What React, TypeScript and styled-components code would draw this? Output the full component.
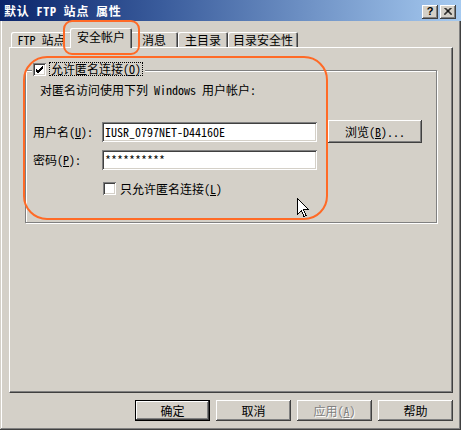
import React from "react";
import styled, { createGlobalStyle } from "styled-components";

const FONT = `"Noto Sans Mono CJK SC", "Noto Sans CJK SC", "Liberation Mono", monospace`;

const GlobalStyle = createGlobalStyle`
  html, body { margin: 0; padding: 0; background: #d4d0c8; }
  body { font-family: ${FONT}; font-size: 12px; color: #000; }
  * { box-sizing: border-box; }
  u { text-decoration: underline; text-underline-offset: 1px; }
`;

const raised = `inset -1px -1px 0 #404040, inset 1px 1px 0 #ffffff, inset -2px -2px 0 #808080, inset 2px 2px 0 #d4d0c8`;
const sunken = `inset 1px 1px 0 #808080, inset -1px -1px 0 #ffffff, inset 2px 2px 0 #404040, inset -2px -2px 0 #d4d0c8`;

const Window = styled.div`
  position: relative;
  width: 461px;
  height: 430px;
  background: #d4d0c8;
  box-shadow: inset -1px -1px 0 #404040, inset 1px 1px 0 #d4d0c8,
    inset -2px -2px 0 #808080, inset 2px 2px 0 #ffffff;
  display: flex;
  flex-direction: column;
  overflow: hidden;
`;

const TitleBar = styled.div`
  flex: none;
  height: 21px;
  display: flex;
  align-items: center;
  padding: 0 5px 0 4px;
  background: linear-gradient(to right, #0a246a 0%, #3a5c9c 35%, #a6caf0 100%);
`;

const TitleText = styled.div`
  flex: 1;
  color: #ffffff;
  font-weight: bold;
  font-size: 12px;
  line-height: 14px;
  letter-spacing: 0.8px;
  white-space: pre;
`;

const CaptionButtons = styled.div`
  display: flex;
  gap: 2px;
  margin-top: 3px;
`;

const CaptionButton = styled.div`
  width: 16px;
  height: 14px;
  background: #d4d0c8;
  box-shadow: inset -1px -1px 0 #404040, inset 1px 1px 0 #ffffff, inset -2px -2px 0 #808080;
  display: flex;
  align-items: center;
  justify-content: center;
  font-family: "Liberation Sans", sans-serif;
  font-weight: bold;
  font-size: 11px;
  line-height: 1;
  padding-bottom: 1px;
`;

const Body = styled.div`
  flex: 1;
  display: flex;
  flex-direction: column;
  padding: 7px 8px 0 9px;
`;

const TabStrip = styled.div`
  display: flex;
  align-items: flex-end;
  height: 19px;
  padding-left: 2px;
  position: relative;
  z-index: 1;
`;

const Tab = styled.div<{ $w: number; $active?: boolean }>`
  position: relative;
  z-index: ${(p) => (p.$active ? 2 : 1)};
  width: ${(p) => p.$w}px;
  height: ${(p) => (p.$active ? 20 : 15)}px;
  margin: ${(p) => (p.$active ? "0 -2px -1px -2px" : "0")};
  background: #d4d0c8;
  border-radius: 2px 2px 0 0;
  box-shadow: inset 1px 1px 0 #ffffff, inset -1px 0 0 #404040, inset -2px 0 0 #808080;
  display: flex;
  justify-content: center;
  align-items: ${(p) => (p.$active ? "flex-start" : "center")};
  padding-top: ${(p) => (p.$active ? "2px" : "1px")};
  line-height: 14px;
  white-space: pre;
`;

const Panel = styled.div`
  height: 346px;
  border-top: 1px solid #ffffff;
  border-left: 1px solid #ffffff;
  border-right: 1px solid #404040;
  border-bottom: 1px solid #404040;
  box-shadow: inset -1px -1px 0 #808080;
  padding: 22px 15px 0 15px;
`;

const GroupBox = styled.div`
  height: 153px;
  border: 1px solid #808080;
  box-shadow: inset 1px 1px 0 #ffffff, 1px 1px 0 #ffffff;
  padding: 0 0 0 7px;
  display: flex;
  flex-direction: column;
`;

const Legend = styled.div`
  align-self: flex-start;
  display: flex;
  align-items: center;
  gap: 3px;
  height: 14px;
  margin: -9px 0 0 -1px;
  padding: 0 2px 0 1px;
  background: #d4d0c8;
`;

const CheckBox = styled.div<{ $offset?: number }>`
  flex: none;
  width: 13px;
  height: 13px;
  margin-left: ${(p) => p.$offset ?? 0}px;
  background: #ffffff;
  box-shadow: ${sunken};
  display: flex;
  align-items: center;
  justify-content: center;
`;

const FocusLabel = styled.span`
  border: 1px dotted #000;
  padding: 0 1px;
  line-height: 12px;
  height: 14px;
  display: inline-flex;
  align-items: center;
  white-space: pre;
`;

const Description = styled.div`
  margin-top: 7px;
  padding-left: 7px;
  line-height: 14px;
  white-space: pre;
`;

const Row = styled.div<{ $top: number; $h: number }>`
  display: flex;
  align-items: center;
  margin-top: ${(p) => p.$top}px;
  height: ${(p) => p.$h}px;
`;

const FieldLabel = styled.div`
  width: 69px;
  flex: none;
  line-height: 14px;
  white-space: pre;
`;

const TextInput = styled.div`
  width: 215px;
  height: 20px;
  flex: none;
  background: #ffffff;
  box-shadow: ${sunken};
  padding: 0 3px;
  display: flex;
  align-items: center;
  line-height: 14px;
  white-space: pre;
`;

const CheckText = styled.span`
  margin-left: 4px;
  line-height: 14px;
  white-space: pre;
`;

const Button = styled.div<{ $w: number; $h: number; $default?: boolean; $disabled?: boolean }>`
  width: ${(p) => p.$w}px;
  height: ${(p) => p.$h}px;
  flex: none;
  background: #d4d0c8;
  border: ${(p) => (p.$default ? "1px solid #000" : "none")};
  box-shadow: ${raised};
  display: flex;
  align-items: center;
  justify-content: center;
  line-height: 14px;
  white-space: pre;
  color: ${(p) => (p.$disabled ? "#808080" : "#000")};
  text-shadow: ${(p) => (p.$disabled ? "1px 1px 0 #ffffff" : "none")};
`;

const BrowseButton = styled(Button)`
  margin-left: 11px;
`;

const ButtonBar = styled.div`
  display: flex;
  justify-content: flex-end;
  gap: 6px;
  margin-top: 7px;
`;

const Highlight = styled.div<{ $x: number; $y: number; $w: number; $h: number; $r: number }>`
  position: absolute;
  left: ${(p) => p.$x}px;
  top: ${(p) => p.$y}px;
  width: ${(p) => p.$w}px;
  height: ${(p) => p.$h}px;
  border: 2px solid #ff6a26;
  border-radius: ${(p) => p.$r}px;
  pointer-events: none;
  z-index: 5;
`;

const Cursor = styled.svg`
  position: absolute;
  left: 297px;
  top: 198px;
  z-index: 6;
`;

const Check = () => (
  <svg width="9" height="9" viewBox="0 0 9 9">
    <path d="M1 4 L3 6 L8 1 M1 5 L3 7 L8 2 M1 6 L3 8 L8 3" stroke="#000" strokeWidth="1" fill="none" shapeRendering="crispEdges" />
  </svg>
);

export default function App() {
  return (
    <>
      <GlobalStyle />
      <Window>
        <TitleBar>
          <TitleText>默认 FTP 站点 属性</TitleText>
          <CaptionButtons>
            <CaptionButton>?</CaptionButton>
            <CaptionButton>
              <svg width="8" height="7" viewBox="0 0 8 7">
                <path d="M0.5 0 L7.5 7 M1.5 0 L8 6.5 M7.5 0 L0.5 7 M6.5 0 L0 6.5" stroke="#000" strokeWidth="1" />
              </svg>
            </CaptionButton>
          </CaptionButtons>
        </TitleBar>
        <Body>
          <TabStrip>
            <Tab $w={61}>FTP 站点</Tab>
            <Tab $w={62} $active>安全帐户</Tab>
            <Tab $w={48}>消息</Tab>
            <Tab $w={50}>主目录</Tab>
            <Tab $w={70}>目录安全性</Tab>
          </TabStrip>
          <Panel>
            <GroupBox>
              <Legend>
                <CheckBox>
                  <Check />
                </CheckBox>
                <FocusLabel>
                  允许匿名连接(<u>O</u>)
                </FocusLabel>
              </Legend>
              <Description>对匿名访问使用下列 Windows 用户帐户:</Description>
              <Row $top={23} $h={23}>
                <FieldLabel>
                  用户名(<u>U</u>):
                </FieldLabel>
                <TextInput>IUSR_0797NET-D44160E</TextInput>
                <BrowseButton $w={94} $h={23}>
                  浏览(<u>B</u>)...
                </BrowseButton>
              </Row>
              <Row $top={7} $h={20}>
                <FieldLabel>
                  密码(<u>P</u>):
                </FieldLabel>
                <TextInput>**********</TextInput>
              </Row>
              <Row $top={12} $h={13}>
                <CheckBox $offset={70} />
                <CheckText>
                  只允许匿名连接(<u>L</u>)
                </CheckText>
              </Row>
            </GroupBox>
          </Panel>
          <ButtonBar>
            <Button $w={75} $h={21} $default>确定</Button>
            <Button $w={75} $h={21}>取消</Button>
            <Button $w={75} $h={21} $disabled>
              应用(<u>A</u>)
            </Button>
            <Button $w={75} $h={21}>帮助</Button>
          </ButtonBar>
        </Body>
        <Highlight $x={63} $y={20} $w={77} $h={35} $r={9} />
        <Highlight $x={23} $y={56} $w={305} $h={164} $r={24} />
        <Cursor width="12" height="19" viewBox="0 0 12 19">
          <path
            d="M0.5 0.5 L0.5 16.5 L4.5 12.5 L7 18.5 L9 17.5 L6.5 11.5 L11.5 11.5 Z"
            fill="#ffffff"
            stroke="#000000"
            strokeWidth="1"
            shapeRendering="crispEdges"
          />
        </Cursor>
      </Window>
    </>
  );
}
